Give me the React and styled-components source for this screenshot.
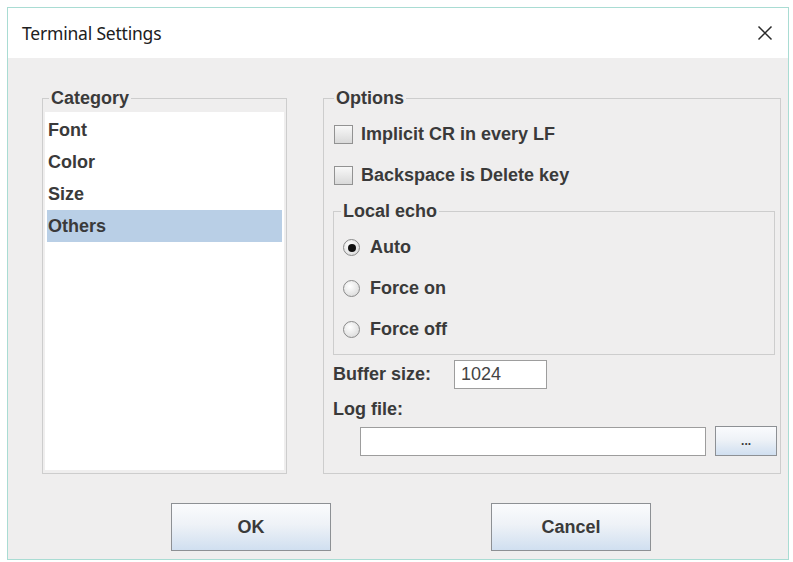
import React from 'react'
import styled, { createGlobalStyle } from 'styled-components'

const Global = createGlobalStyle`
  html, body {
    margin: 0;
    padding: 0;
    background: #ffffff;
  }
  * { box-sizing: border-box; }
`

const Window = styled.div`
  margin: 7px 0 0 7px;
  width: 782px;
  height: 553px;
  border: 1px solid #a9dcd3;
  display: flex;
  flex-direction: column;
  font-family: "Liberation Sans", Arial, sans-serif;
  color: #383838;
`

const TitleBar = styled.div`
  height: 50px;
  background: #ffffff;
  display: flex;
  align-items: center;
  justify-content: space-between;
  padding: 0 15px 0 14px;
`

const Title = styled.span`
  font-family: "Noto Sans", "Open Sans", sans-serif;
  font-size: 17.5px;
  letter-spacing: -0.2px;
  color: #202020;
`

const Body = styled.div`
  flex: 1;
  background: #efeeee;
  padding: 30px 7px 0 34px;
  display: flex;
  flex-direction: column;
`

const MainRow = styled.div`
  display: flex;
  gap: 36px;
  height: 386px;
`

const Group = styled.fieldset`
  margin: 0;
  border: 1px solid #cdcdcd;
  width: ${p => p.$w}px;
  padding: ${p => p.$pad};
  min-width: 0;
`

const Legend = styled.legend`
  font-size: 18px;
  font-weight: bold;
  line-height: 20px;
  padding: 0 2px;
  margin-left: ${p => p.$ml || 0}px;
  color: #3a3a3a;
`

const List = styled.ul`
  list-style: none;
  margin: 0;
  padding: 2px 0 0;
  height: 358px;
  background: #ffffff;
`

const Item = styled.li`
  height: 32px;
  line-height: 32px;
  margin: 0 2px;
  padding-left: 1px;
  font-size: 18px;
  font-weight: bold;
  color: #3a3a3a;
  background: ${p => (p.$selected ? '#b9cfe6' : 'transparent')};
`

const OptionRow = styled.div`
  height: 41px;
  display: flex;
  align-items: center;
  gap: ${p => p.$gap || 8}px;
  font-size: 18px;
  font-weight: bold;
  color: #3a3a3a;
`

const CheckBox = styled.span`
  width: 19px;
  height: 19px;
  border: 1px solid #929292;
  background: linear-gradient(#f8f8f8, #d9d9d9);
`

const Radio = styled.span`
  width: 17px;
  height: 17px;
  margin-left: 2px;
  border-radius: 50%;
  border: 1px solid #8a8a8a;
  background: radial-gradient(circle at 40% 35%, #ffffff, #d4d4d4);
  display: flex;
  align-items: center;
  justify-content: center;
  &::after {
    content: '';
    width: 8px;
    height: 8px;
    border-radius: 50%;
    background: ${p => (p.$checked ? '#111' : 'transparent')};
  }
`

const Field = styled.div`
  display: flex;
  align-items: center;
  margin: ${p => p.$m};
  height: ${p => p.$h}px;
`

const Label = styled.span`
  width: ${p => p.$w || 'auto'};
  font-size: 18px;
  font-weight: bold;
  color: #3a3a3a;
`

const TextBox = styled.div`
  width: ${p => p.$w}px;
  height: 29px;
  background: #ffffff;
  border: 1px solid #9d9d9d;
  font-size: 18px;
  color: #444;
  padding-left: 6px;
  line-height: 27px;
`

const Button = styled.button`
  width: ${p => p.$w}px;
  height: ${p => p.$h}px;
  border: 1px solid #8d9094;
  background: linear-gradient(#fafbfd 0%, #eef2f7 45%, #d0dff0 100%);
  font-family: "Liberation Sans", Arial, sans-serif;
  font-size: ${p => p.$fs || 18}px;
  font-weight: bold;
  color: #3a3a3a;
  padding: 0;
`

const ButtonRow = styled.div`
  display: flex;
  gap: 160px;
  margin: 29px 0 0 129px;
`

function CloseIcon() {
  return (
    <svg width="16" height="16" viewBox="0 0 16 16">
      <path d="M1.5 1.5 L14.5 14.5 M14.5 1.5 L1.5 14.5" stroke="#2a2a2a" strokeWidth="1.5" />
    </svg>
  )
}

export default function App() {
  const categories = ['Font', 'Color', 'Size', 'Others']
  return (
    <>
      <Global />
      <Window>
        <TitleBar>
          <Title>Terminal Settings</Title>
          <CloseIcon />
        </TitleBar>
        <Body>
          <MainRow>
            <Group $w={245} $pad="4px 2px 2px 2px">
              <Legend $ml={4}>Category</Legend>
              <List>
                {categories.map(c => (
                  <Item key={c} $selected={c === 'Others'}>{c}</Item>
                ))}
              </List>
            </Group>
            <Group $w={458} $pad="6px 3px 2px 10px">
              <Legend>Options</Legend>
              <OptionRow>
                <CheckBox />
                Implicit CR in every LF
              </OptionRow>
              <OptionRow>
                <CheckBox />
                Backspace is Delete key
              </OptionRow>
              <Group $w={442} $pad="6px 4px 4px 7px" style={{ marginTop: 5, marginLeft: -1 }}>
                <Legend>Local echo</Legend>
                <OptionRow $gap={10}>
                  <Radio $checked />
                  Auto
                </OptionRow>
                <OptionRow $gap={10}>
                  <Radio />
                  Force on
                </OptionRow>
                <OptionRow $gap={10}>
                  <Radio />
                  Force off
                </OptionRow>
              </Group>
              <Field $m="5px 0 0 -1px" $h={29}>
                <Label $w="121px">Buffer size:</Label>
                <TextBox $w={93}>1024</TextBox>
              </Field>
              <Field $m="8px 0 0 -1px" $h={24}>
                <Label>Log file:</Label>
              </Field>
              <Field $m="5px 0 0 26px" $h={30}>
                <TextBox $w={347} />
                <Button $w={62} $h={30} $fs={12} style={{ marginLeft: 9 }}>...</Button>
              </Field>
            </Group>
          </MainRow>
          <ButtonRow>
            <Button $w={160} $h={48}>OK</Button>
            <Button $w={160} $h={48}>Cancel</Button>
          </ButtonRow>
        </Body>
      </Window>
    </>
  )
}
